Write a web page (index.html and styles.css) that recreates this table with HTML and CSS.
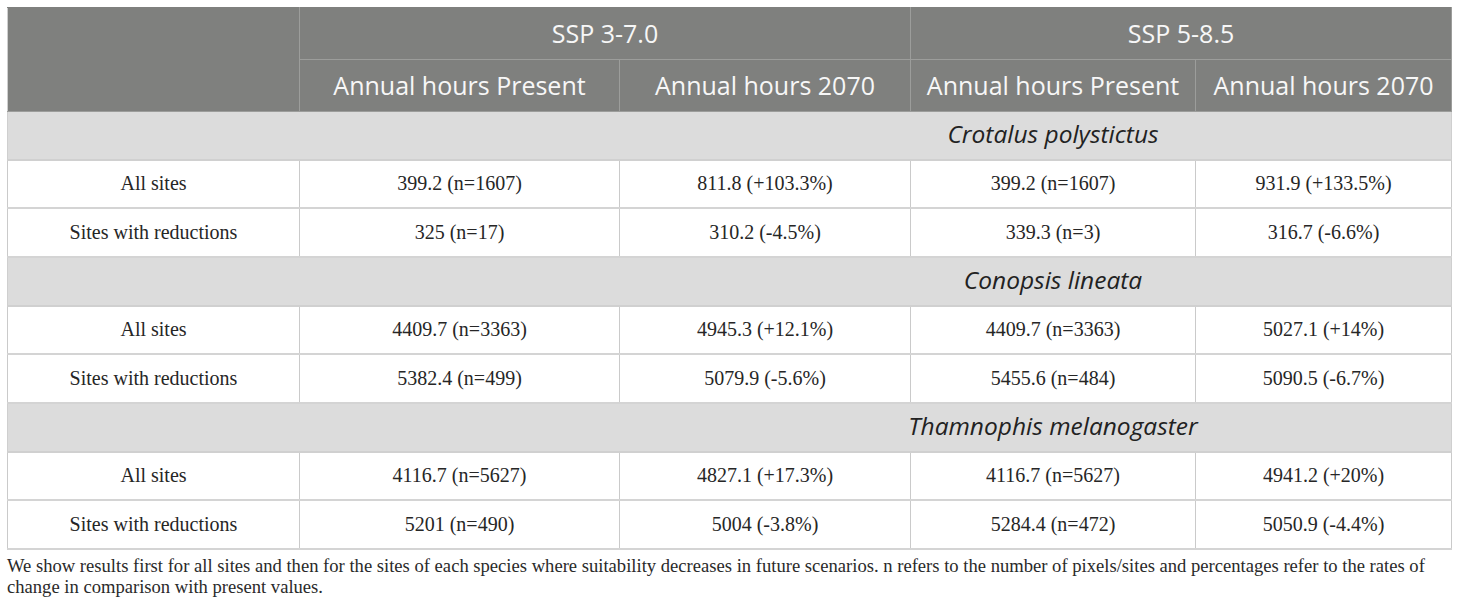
FILE: index.html
```html
<!DOCTYPE html>
<html lang="en">
<head>
<meta charset="utf-8">
<title>Annual hours table</title>
<link rel="stylesheet" href="styles.css">
</head>
<body>
<div class="wrap">
<table class="data">
  <colgroup>
    <col class="c1"><col class="c2"><col class="c3"><col class="c4"><col class="c5">
  </colgroup>
  <thead>
    <tr class="h1">
      <th rowspan="2" class="blank"></th>
      <th colspan="2">SSP 3-7.0</th>
      <th colspan="2">SSP 5-8.5</th>
    </tr>
    <tr class="h2">
      <th>Annual hours Present</th>
      <th>Annual hours 2070</th>
      <th>Annual hours Present</th>
      <th>Annual hours 2070</th>
    </tr>
  </thead>
  <tbody>
    <tr class="sp">
      <td></td><td></td><td></td><td><span class="name">Crotalus polystictus</span></td><td></td>
    </tr>
    <tr>
      <td>All sites</td><td>399.2 (n=1607)</td><td>811.8 (+103.3%)</td><td>399.2 (n=1607)</td><td>931.9 (+133.5%)</td>
    </tr>
    <tr>
      <td>Sites with reductions</td><td>325 (n=17)</td><td>310.2 (-4.5%)</td><td>339.3 (n=3)</td><td>316.7 (-6.6%)</td>
    </tr>
    <tr class="sp">
      <td></td><td></td><td></td><td><span class="name">Conopsis lineata</span></td><td></td>
    </tr>
    <tr>
      <td>All sites</td><td>4409.7 (n=3363)</td><td>4945.3 (+12.1%)</td><td>4409.7 (n=3363)</td><td>5027.1 (+14%)</td>
    </tr>
    <tr>
      <td>Sites with reductions</td><td>5382.4 (n=499)</td><td>5079.9 (-5.6%)</td><td>5455.6 (n=484)</td><td>5090.5 (-6.7%)</td>
    </tr>
    <tr class="sp">
      <td></td><td></td><td></td><td><span class="name">Thamnophis melanogaster</span></td><td></td>
    </tr>
    <tr>
      <td>All sites</td><td>4116.7 (n=5627)</td><td>4827.1 (+17.3%)</td><td>4116.7 (n=5627)</td><td>4941.2 (+20%)</td>
    </tr>
    <tr>
      <td>Sites with reductions</td><td>5201 (n=490)</td><td>5004 (-3.8%)</td><td>5284.4 (n=472)</td><td>5050.9 (-4.4%)</td>
    </tr>
  </tbody>
</table>
<p class="note">We show results first for all sites and then for the sites of each species where suitability decreases in future scenarios. n refers to the number of pixels/sites and percentages refer to the rates of change in comparison with present values.</p>
</div>
</body>
</html>
```
FILE: styles.css
```css
html, body {
  margin: 0;
  padding: 0;
  background: #ffffff;
}

.wrap {
  padding: 7px 9px 0 7px;
}

.data {
  border-collapse: collapse;
  table-layout: fixed;
  width: 1444px;
  border: 1px solid #cfcfcf;
}

.c1 { width: 292px; }
.c2 { width: 320px; }
.c3 { width: 291px; }
.c4 { width: 285px; }
.c5 { width: 256px; }

.data th {
  background: #7f807e;
  color: #f7f7f7;
  font-family: "Open Sans", "Noto Sans", sans-serif;
  font-weight: 400;
  font-size: 25px;
  height: 49px;
  padding: 0 0 2px 0;
  border: 1px solid #9c9d9b;
  text-align: center;
  vertical-align: middle;
  white-space: nowrap;
}

.data .h1 th {
  border-top-color: #7f807e;
}

.data .blank {
  border-left-color: #cfcfcf;
}

.data td {
  font-family: "Liberation Serif", "Times New Roman", serif;
  font-size: 20px;
  color: #262626;
  text-align: center;
  vertical-align: middle;
  height: 46.67px;
  padding: 0;
  border-left: 1px solid #cacaca;
  border-right: 1px solid #cacaca;
  border-bottom: 2px solid #d4d4d4;
  white-space: nowrap;
}

.data .sp td {
  background: #dcdcdc;
  border-left-color: #dcdcdc;
  border-right-color: #dcdcdc;
  border-bottom: 2px solid #d0d0d0;
  overflow: visible;
}

.data .sp td:first-child {
  border-left-color: #cfcfcf;
}

.data .sp td:last-child {
  border-right-color: #cfcfcf;
}

.name {
  display: flex;
  justify-content: center;
  margin-top: -3px;
  font-family: "Open Sans", "Noto Sans", sans-serif;
  font-style: italic;
  font-size: 24.5px;
  color: #222222;
  white-space: nowrap;
}

.note {
  margin: 5px 0 0 0;
  font-family: "Liberation Serif", "Times New Roman", serif;
  font-size: 18.6px;
  line-height: 21px;
  color: #2a2a2a;
}
```
